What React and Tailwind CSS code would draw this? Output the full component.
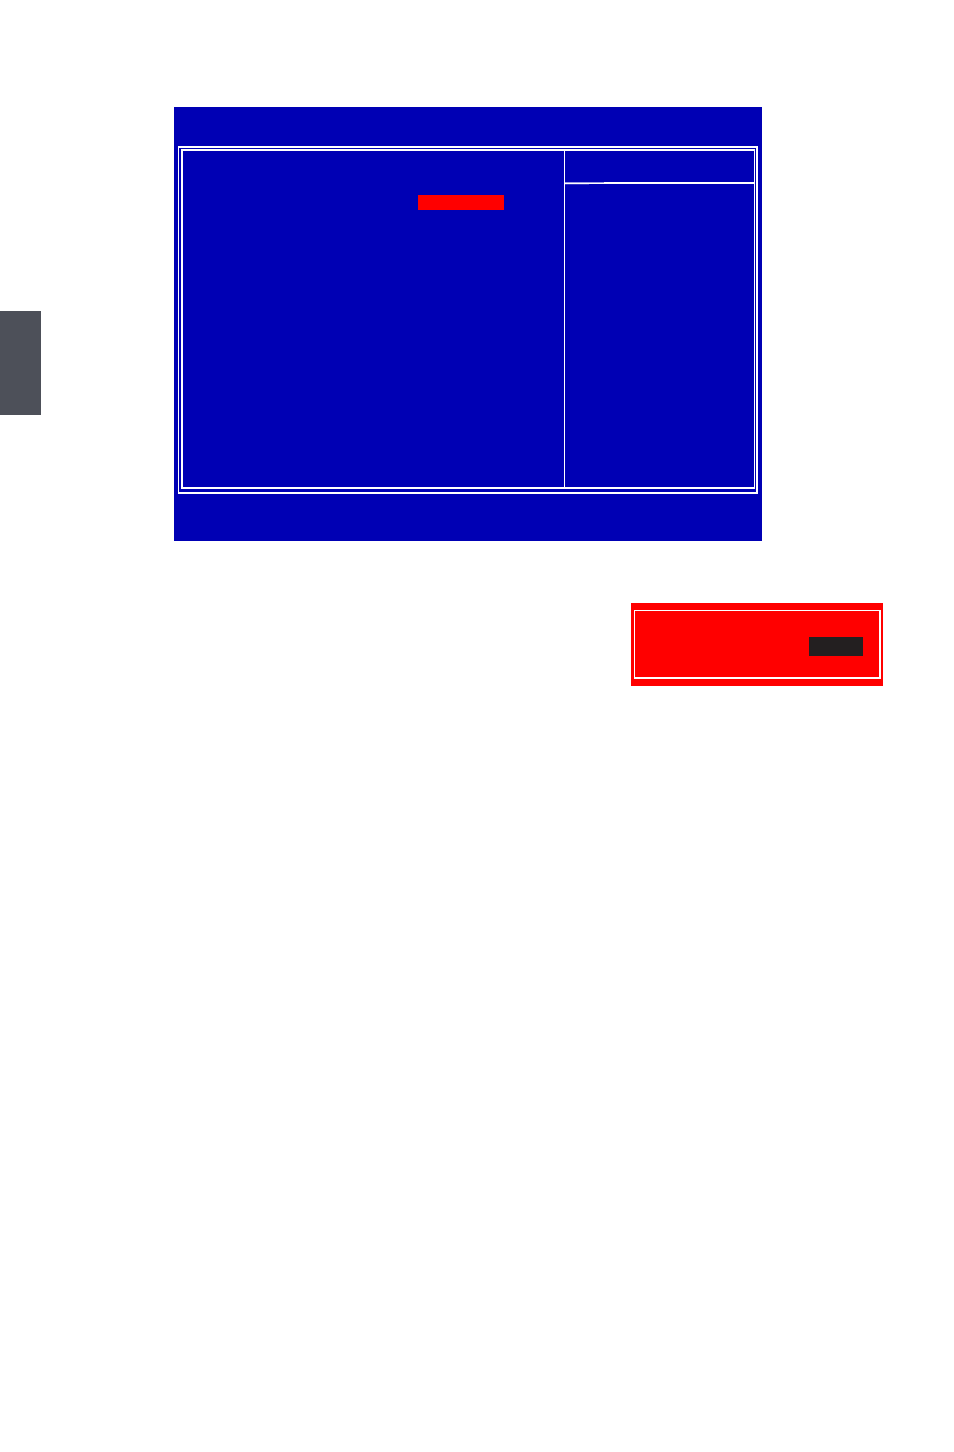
function SetupScreen() {
  return (
    <section className="bg-[#0000b4] px-1 pt-[39px] pb-[47px]">
      {/* Double frame */}
      <div className="border-y-2 border-r-2 border-l border-white pt-px pr-px pb-[3px] pl-0.5">
        <div className="grid h-[340px] grid-cols-[381fr_190fr] border-y-2 border-r border-l-2 border-white">
          {/* Options */}
          <div className="pt-11 pl-[235px]">
            <div className="h-[15px] w-[86px] bg-[#ff0000]" />
          </div>

          {/* Item help */}
          <div className="border-l border-white">
            <div className="relative h-[33px] border-b-2 border-white">
              <span className="absolute top-full left-0 h-px w-[39px] bg-[#9999e1]" />
              {/* faint edge under the rule */}
              <span className="absolute top-full left-0 mt-0.5 h-px w-6 bg-[#3333c3]" />
            </div>
          </div>
        </div>
      </div>
    </section>
  );
}

function ConfirmDialog() {
  return (
    <section className="w-[252px] bg-[#ff0000] py-[7px] pr-0.5 pl-[3px]">
      <div className="flex h-[69px] justify-end border-t border-r-2 border-b-2 border-l border-white pt-[26px] pr-4">
        <div className="h-[19px] w-[54px] bg-[#231f20]" />
      </div>
    </section>
  );
}

export default function App() {
  return (
    <div className="flex min-h-screen items-start bg-white font-['Liberation_Sans',sans-serif]">
      {/* Chapter tab */}
      <aside className="mt-[311px] h-[104px] w-[41px] shrink-0 bg-[#4d5059]" />

      <main className="min-w-0 flex-1 pt-[107px]">
        <div className="mr-48 ml-[133px]">
          <SetupScreen />
        </div>
        <div className="mt-[62px] mr-[71px] flex justify-end">
          <ConfirmDialog />
        </div>
      </main>
    </div>
  );
}
